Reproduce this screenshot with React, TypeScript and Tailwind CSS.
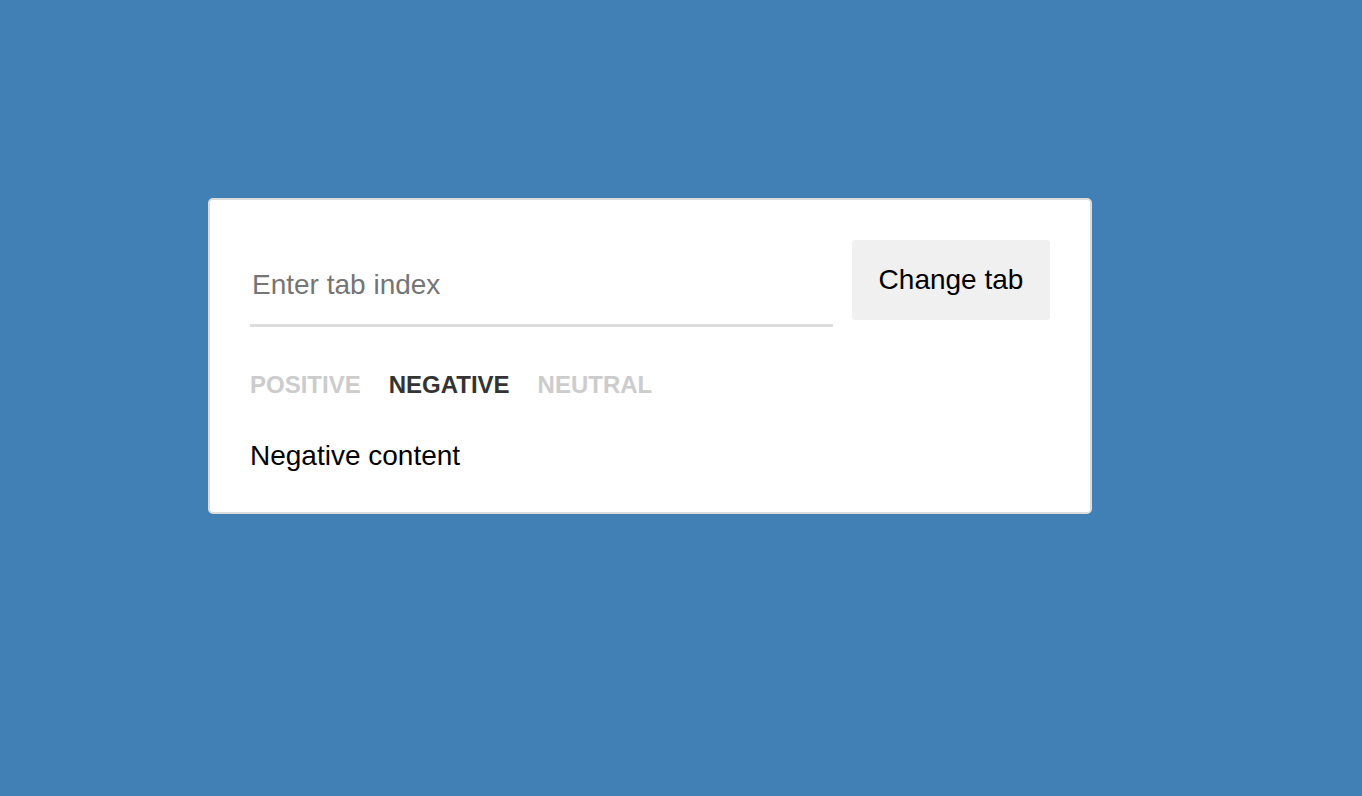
import React, { useState } from "react";

export default function App() {
  const [active, setActive] = useState(1);
  const tabs = ["Positive", "Negative", "Neutral"];
  const contents = ["Positive content", "Negative content", "Neutral content"];
  return (
    <div className="min-h-[796px] w-full bg-[#4180b4] pt-[198px] pl-[208px] font-['Liberation_Sans',Arial,sans-serif]">
      <div className="w-[884px] h-[316px] rounded-[5px] border-2 border-[#dcdcdc] bg-white px-[40px] pt-[40px] pb-[40px]">
        <div className="flex items-start gap-[19px]">
          <input
            type="text"
            placeholder="Enter tab index"
            className="h-[87px] w-[583px] border-0 border-b-[3px] border-solid border-[#dddddd] bg-transparent px-[2px] pt-[6px] text-[28px] text-black outline-none placeholder:text-[#757575]"
          />
          <button className="h-[80px] w-[198px] rounded-[3px] bg-[#f0f0f0] text-[28px] text-black">
            Change tab
          </button>
        </div>
        <div className="mt-[44px] flex gap-[28px]">
          {tabs.map((t, i) => (
            <button
              key={t}
              onClick={() => setActive(i)}
              className={
                "text-[24px] leading-[28px] font-bold uppercase " +
                (i === active ? "text-[#333333]" : "text-[#cccccc]")
              }
            >
              {t}
            </button>
          ))}
        </div>
        <div className="mt-[41px] text-[28px] leading-[32px] text-black">{contents[active]}</div>
      </div>
    </div>
  );
}
